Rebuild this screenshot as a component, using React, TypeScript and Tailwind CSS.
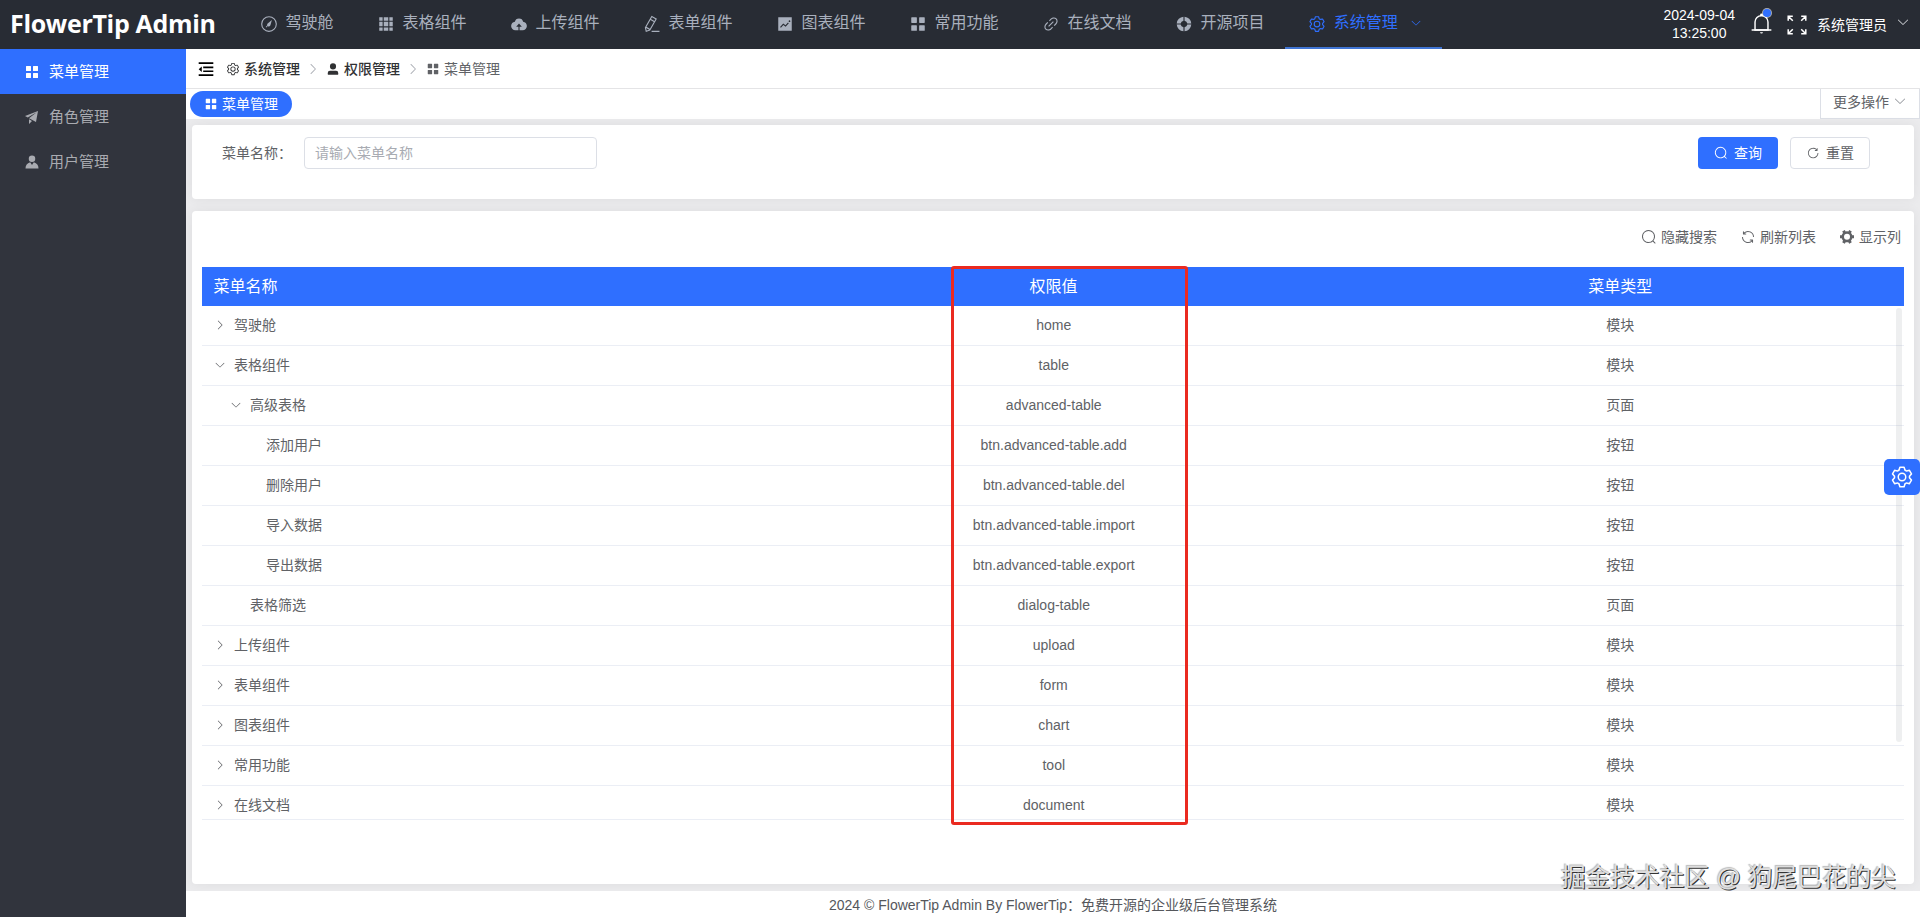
import { useState } from "react";

const paths: Record<string, string[]> = {
  setting: [
    "M600.704 64a32 32 0 0 1 30.464 22.208l35.2 109.376c14.784 7.232 28.928 15.36 42.432 24.512l112.384-24.192a32 32 0 0 1 34.432 15.36L944.32 364.8a32 32 0 0 1-4.032 37.504l-77.12 85.12a357.12 357.12 0 0 1 0 49.024l77.12 85.248a32 32 0 0 1 4.032 37.504l-88.704 153.6a32 32 0 0 1-34.432 15.296L708.8 803.904c-13.44 9.088-27.648 17.28-42.368 24.512l-35.264 109.376A32 32 0 0 1 600.704 960H423.296a32 32 0 0 1-30.464-22.208L357.696 828.48a351.616 351.616 0 0 1-42.56-24.64l-112.32 24.256a32 32 0 0 1-34.432-15.36L79.68 659.2a32 32 0 0 1 4.032-37.504l77.12-85.248a357.12 357.12 0 0 1 0-48.896l-77.12-85.248A32 32 0 0 1 79.68 364.8l88.704-153.6a32 32 0 0 1 34.432-15.296l112.32 24.256c13.568-9.152 27.776-17.408 42.56-24.64l35.2-109.312A32 32 0 0 1 423.232 64H600.64zm-23.424 64H446.72l-36.352 113.088-24.512 11.968a294.113 294.113 0 0 0-34.816 20.096l-22.656 15.36-116.224-25.088-65.28 113.152 79.68 88.192-1.92 27.136a293.12 293.12 0 0 0 0 40.192l1.92 27.136-79.808 88.192 65.344 113.152 116.224-25.024 22.656 15.296a294.113 294.113 0 0 0 34.816 20.096l24.512 11.968L446.72 896h130.688l36.48-113.152 24.448-11.904a288.282 288.282 0 0 0 34.752-20.096l22.592-15.296 116.288 25.024 65.28-113.152-79.744-88.192 1.92-27.136a293.12 293.12 0 0 0 0-40.256l-1.92-27.136 79.808-88.128-65.344-113.152-116.288 24.96-22.592-15.232a287.616 287.616 0 0 0-34.752-20.096l-24.448-11.904L577.344 128zM512 320a192 192 0 1 1 0 384 192 192 0 0 1 0-384m0 64a128 128 0 1 0 0 256 128 128 0 0 0 0-256",
  ],
  search: [
    "m795.904 750.72 124.992 124.928a32 32 0 0 1-45.248 45.248L750.656 795.904a416 416 0 1 1 45.248-45.248zM480 832a352 352 0 1 0 0-704 352 352 0 0 0 0 704",
  ],
  down: [
    "M831.872 340.864 512 652.672 192.128 340.864a30.592 30.592 0 0 0-42.752 0 29.12 29.12 0 0 0 0 41.6L489.664 714.24a32 32 0 0 0 44.672 0l340.288-331.712a29.12 29.12 0 0 0 0-41.728 30.592 30.592 0 0 0-42.752 0z",
  ],
  right: [
    "M340.864 149.312a30.592 30.592 0 0 0 0 42.752L652.736 512 340.864 831.872a30.592 30.592 0 0 0 0 42.752 29.12 29.12 0 0 0 41.728 0L714.24 534.336a32 32 0 0 0 0-44.672L382.592 149.376a29.12 29.12 0 0 0-41.728 0z",
  ],
  refresh: [
    "M771.776 794.88A384 384 0 0 1 128 512h64a320 320 0 0 0 555.712 216.448H654.72a32 32 0 1 1 0-64h149.056a32 32 0 0 1 32 32v148.928a32 32 0 1 1-64 0v-50.56zM276.288 295.616h92.992a32 32 0 0 1 0 64H220.16a32 32 0 0 1-32-32V178.56a32 32 0 0 1 64 0v50.56A384 384 0 0 1 896.128 512h-64a320 320 0 0 0-555.776-216.384z",
  ],
  reset: [
    "M784.512 230.272v-50.56a32 32 0 1 1 64 0v149.056a32 32 0 0 1-32 32H667.52a32 32 0 1 1 0-64h92.992A320 320 0 1 0 524.8 833.152a320 320 0 0 0 320-320h64a384 384 0 0 1-384 384 384 384 0 0 1-384-384 384 384 0 0 1 643.712-282.88z",
  ],
  bell: [
    "M512 64a64 64 0 0 1 64 64v64H448v-64a64 64 0 0 1 64-64",
    "M256 768h512V448a256 256 0 1 0-512 0zm256-640a320 320 0 0 1 320 320v384H192V448a320 320 0 0 1 320-320",
    "M96 768h832q32 0 32 32t-32 32H96q-32 0-32-32t32-32m352 128h128a64 64 0 0 1-128 0",
  ],
  user: [
    "M288 320a224 224 0 1 0 448 0 224 224 0 1 0-448 0m544 608H160a32 32 0 0 1-32-32v-96a160 160 0 0 1 160-160h448a160 160 0 0 1 160 160v96a32 32 0 0 1-32 32z",
  ],
  promotion: [
    "m64 448 832-320-128 704-446.08-243.328L832 192 242.816 545.472zm256 512V657.024L512 768z",
  ],
  avatar: [
    "M628.736 528.896A416 416 0 0 1 928 928H96a415.872 415.872 0 0 1 299.264-399.104L512 704zM720 304a208 208 0 1 1-416 0 208 208 0 0 1 416 0",
  ],
  menu: [
    "M160 448a32 32 0 0 1-32-32V160a32 32 0 0 1 32-32h256a32 32 0 0 1 32 32v256a32 32 0 0 1-32 32zm448 0a32 32 0 0 1-32-32V160a32 32 0 0 1 32-32h256a32 32 0 0 1 32 32v256a32 32 0 0 1-32 32zM160 896a32 32 0 0 1-32-32V608a32 32 0 0 1 32-32h256a32 32 0 0 1 32 32v256a32 32 0 0 1-32 32zm448 0a32 32 0 0 1-32-32V608a32 32 0 0 1 32-32h256a32 32 0 0 1 32 32v256a32 32 0 0 1-32 32z",
  ],
  grid: [
    "M640 384v256H384V384zm64 0h192v256H704zm-64 512H384V704h256zm64 0V704h192v192zm-64-768v192H384V128zm64 0h192v192H704zM320 384v256H128V384zm0 512H128V704h192zm0-768v192H128V128z",
  ],
  upload: [
    "M544 864V672h128L512 480 352 672h128v192H320v-1.6c-5.376.32-10.496 1.6-16 1.6A240 240 0 0 1 64 624c0-123.136 93.12-223.488 212.608-237.248A239.808 239.808 0 0 1 512 192a239.872 239.872 0 0 1 235.456 194.752c119.488 13.76 212.48 114.112 212.48 237.248a240 240 0 0 1-240 240c-5.376 0-10.56-1.28-16-1.6v1.6z",
  ],
  edit: [
    "m199.04 672.64 193.984 112 224-387.968-193.92-112-224 388.032zm-23.872 60.16 32.896 148.288 144.896-45.696zM455.04 229.248l193.92 112 56.704-98.112-193.984-112-56.64 98.112zM104.32 708.8l384-665.024 304.768 175.936L409.152 884.8h.064l-248.448 78.336zm384 254.272v-64h448v64h-448z",
  ],
  chart: [
    "M128 896V128h768v768zm291.712-327.296 128 102.4 180.16-201.792-47.744-42.624-139.84 156.608-128-102.4-180.16 201.792 47.744 42.624 139.84-156.608zM816 352a48 48 0 1 0-96 0 48 48 0 0 0 96 0",
  ],
  compass: [
    "M512 896a384 384 0 1 0 0-768 384 384 0 0 0 0 768m0 64a448 448 0 1 1 0-896 448 448 0 0 1 0 896",
    "M676 290 592 590a90 90 0 0 1-80 70 84 84 0 0 1-66-30L360 716l-36-36 88-90a88 88 0 0 1 24-104z",
  ],
  link: [
    "M715.648 625.152 670.4 579.904l90.496-90.56c75.008-74.944 85.12-186.368 22.656-248.896-62.528-62.464-173.952-52.352-248.96 22.656L444.16 353.6l-45.248-45.248 90.496-90.496c100.032-99.968 251.968-110.08 339.456-22.656 87.488 87.488 77.312 239.424-22.656 339.456l-90.496 90.496zm-90.496 90.496-90.496 90.496C434.624 906.112 282.688 916.224 195.2 828.8c-87.488-87.488-77.312-239.424 22.656-339.456l90.496-90.496 45.248 45.248-90.496 90.56c-75.008 74.944-85.12 186.368-22.656 248.896 62.528 62.464 173.952 52.352 248.96-22.656l90.496-90.496zm0-362.048 45.248 45.248L398.848 670.4 353.6 625.152z",
  ],
  help: [
    "M926.784 480H701.312A192.512 192.512 0 0 0 544 322.688V97.216A416.064 416.064 0 0 1 926.784 480m0 64A416.064 416.064 0 0 1 544 926.784V701.312A192.512 192.512 0 0 0 701.312 544zM97.28 544h225.472A192.512 192.512 0 0 0 480 701.312v225.472A416.064 416.064 0 0 1 97.216 544zm0-64A416.064 416.064 0 0 1 480 97.216v225.472A192.512 192.512 0 0 0 322.688 480H97.216z",
  ],
  tools: [
    "M764.416 254.72a351.68 351.68 0 0 1 86.336 149.184H960v192.064H850.752a351.68 351.68 0 0 1-86.336 149.312l54.72 94.72-166.272 96-54.592-94.72a352.64 352.64 0 0 1-172.48 0L371.136 936l-166.272-96 54.72-94.72a351.68 351.68 0 0 1-86.336-149.312H64v-192h109.248a351.68 351.68 0 0 1 86.336-149.312L204.8 160l166.208-96h.192l54.656 94.592a352.64 352.64 0 0 1 172.48 0L652.8 64h.128L819.2 160l-54.72 94.72zM704 499.968a192 192 0 1 0-384 0 192 192 0 0 0 384 0",
  ],
  fold: [
    "M96 128h832v96H96zM352 368h576v96H352zM352 592h576v96H352zM96 816h832v96H96zM272 368v320L96 528z",
  ],
};

function Icon({ name, className = "" }: { name: string; className?: string }) {
  return (
    <svg viewBox="0 0 1024 1024" fill="currentColor" className={`shrink-0 ${className}`} aria-hidden="true">
      {paths[name].map((d) => (
        <path key={d} d={d} />
      ))}
    </svg>
  );
}

const navItems = [
  { icon: "compass", label: "驾驶舱" },
  { icon: "grid", label: "表格组件" },
  { icon: "upload", label: "上传组件" },
  { icon: "edit", label: "表单组件" },
  { icon: "chart", label: "图表组件" },
  { icon: "menu", label: "常用功能" },
  { icon: "link", label: "在线文档" },
  { icon: "help", label: "开源项目" },
];

const sideItems = [
  { icon: "menu", label: "菜单管理" },
  { icon: "promotion", label: "角色管理" },
  { icon: "avatar", label: "用户管理" },
];

type Row = { name: string; value: string; type: string; level: number; arrow?: "right" | "down" };

const rows: Row[] = [
  { name: "驾驶舱", value: "home", type: "模块", level: 0, arrow: "right" },
  { name: "表格组件", value: "table", type: "模块", level: 0, arrow: "down" },
  { name: "高级表格", value: "advanced-table", type: "页面", level: 1, arrow: "down" },
  { name: "添加用户", value: "btn.advanced-table.add", type: "按钮", level: 2 },
  { name: "删除用户", value: "btn.advanced-table.del", type: "按钮", level: 2 },
  { name: "导入数据", value: "btn.advanced-table.import", type: "按钮", level: 2 },
  { name: "导出数据", value: "btn.advanced-table.export", type: "按钮", level: 2 },
  { name: "表格筛选", value: "dialog-table", type: "页面", level: 1 },
  { name: "上传组件", value: "upload", type: "模块", level: 0, arrow: "right" },
  { name: "表单组件", value: "form", type: "模块", level: 0, arrow: "right" },
  { name: "图表组件", value: "chart", type: "模块", level: 0, arrow: "right" },
  { name: "常用功能", value: "tool", type: "模块", level: 0, arrow: "right" },
  { name: "在线文档", value: "document", type: "模块", level: 0, arrow: "right" },
];

const indents = ["pl-3", "pl-7", "pl-11"];

function Header() {
  return (
    <header className="flex h-[49px] shrink-0 bg-[#282c34]">
      <div className="flex w-[236.5px] shrink-0 items-center pb-px pl-[10px] font-['Open_Sans'] text-[25px] font-bold tracking-[-0.32px] whitespace-nowrap text-white">
        FlowerTip Admin
      </div>
      <nav className="flex text-base text-[#a9b0bd]">
        {navItems.map((item) => (
          <a key={item.label} className="flex items-center px-5 pb-[3px]">
            <span className="mr-[5px] flex w-6 justify-center pt-[2px]">
              <Icon name={item.icon} className="size-[18px]" />
            </span>
            {item.label}
          </a>
        ))}
        <a className="flex w-[157px] items-center border-b-2 border-[#4075d4] pl-5 pb-px text-[#2f6fff]">
          <span className="mr-[5px] flex w-6 justify-center pt-[2px]">
            <Icon name="setting" className="size-[18px]" />
          </span>
          系统管理
          <Icon name="down" className="ml-3 size-3" />
        </a>
      </nav>
      <div className="ml-auto flex items-center text-sm text-white">
        <div className="mr-[15px] pb-px text-center leading-[18px]">
          2024-09-04
          <br />
          13:25:00
        </div>
        <div className="relative mr-[14px] mb-[2px]">
          <Icon name="bell" className="size-[23px]" />
          <span className="absolute -top-[3px] right-[2px] size-2 rounded-full bg-[#2f6fff] ring-1 ring-white/60" />
        </div>
        <svg viewBox="0 0 20 20" className="mr-[10px] size-5" fill="none" stroke="currentColor" strokeWidth="1.5">
          <path d="M1.2 5.8V1.2h4.6M1.2 1.2l4.6 4.6M14.2 1.2h4.6v4.6M18.8 1.2l-4.6 4.6M1.2 14.2v4.6h4.6M1.2 18.8l4.6-4.6M18.8 14.2v4.6h-4.6M18.8 18.8l-4.6-4.6" />
        </svg>
        <span className="leading-5">系统管理员</span>
        <Icon name="down" className="mr-[10px] mb-[5px] ml-[9px] size-[14px] text-[#d5d7db]" />
      </div>
    </header>
  );
}

function Sidebar() {
  return (
    <aside className="w-[186px] shrink-0 bg-[#31343d]">
      {sideItems.map((item, i) => (
        <a
          key={item.label}
          className={`flex h-[45px] items-center pl-6 text-[15px] ${i === 0 ? "bg-[#2f6fff] text-white" : "text-[#a9abb1]"}`}
        >
          <Icon name={item.icon} className="mr-[9px] size-4" />
          <span className="pt-px">{item.label}</span>
        </a>
      ))}
    </aside>
  );
}

function Breadcrumb() {
  return (
    <div className="flex h-10 shrink-0 items-center border-b border-[#e4e4e6] pl-[11px] text-sm">
      <Icon name="fold" className="mr-[11px] size-[18px] text-black" />
      <Icon name="setting" className="mr-1 size-[14px] text-[#303133]" />
      <span className="font-medium text-[#303133]">系统管理</span>
      <Icon name="right" className="mx-[6px] size-[14px] text-[#a8abb2]" />
      <Icon name="user" className="mr-1 size-[14px] text-[#303133]" />
      <span className="font-medium text-[#303133]">权限管理</span>
      <Icon name="right" className="mx-[6px] size-[14px] text-[#a8abb2]" />
      <Icon name="menu" className="mr-1 size-[14px] text-[#606266]" />
      <span className="text-[#606266]">菜单管理</span>
    </div>
  );
}

function TabBar() {
  return (
    <div className="flex h-[30px] shrink-0 items-center pl-1 text-sm">
      <div className="flex h-[26px] w-[102px] items-center justify-center gap-1 rounded-full bg-[#2f6fff] text-white">
        <Icon name="menu" className="size-[14px]" />
        <span>菜单管理</span>
      </div>
      <div className="ml-auto flex h-[30px] w-[100px] items-center border border-t-0 border-[#dcdfe6] pb-[3px] pl-3 text-[#606266]">
        更多操作
        <Icon name="down" className="mb-[3px] ml-1 size-[14px] text-[#909399]" />
      </div>
    </div>
  );
}

function SearchCard() {
  return (
    <section className="flex h-[74px] shrink-0 items-start rounded-[4px] bg-white pt-3 pr-11 pl-[30px] text-sm text-[#606266] shadow-[0_0_12px_rgba(0,0,0,0.06)]">
      <label className="w-[82px] leading-8">菜单名称：</label>
      <input
        className="h-8 w-[293px] rounded-[4px] border border-[#dcdfe6] px-[10px] text-sm placeholder:text-[#a8abb2]"
        placeholder="请输入菜单名称"
      />
      <button className="ml-auto flex h-8 w-20 items-center justify-center gap-[6px] rounded-[4px] bg-[#2f6fff] text-white">
        <Icon name="search" className="size-[14px]" />
        查询
      </button>
      <button className="ml-3 flex h-8 w-20 items-center justify-center gap-[6px] rounded-[4px] border border-[#dcdfe6]">
        <Icon name="reset" className="size-[14px]" />
        重置
      </button>
    </section>
  );
}

function Toolbar() {
  return (
    <div className="flex h-[56px] items-center justify-end gap-[23px] pr-[3px] pb-[5px]">
      <span className="flex items-center gap-1">
        <Icon name="search" className="size-4" />
        隐藏搜索
      </span>
      <span className="flex items-center gap-1">
        <Icon name="refresh" className="size-4" />
        刷新列表
      </span>
      <span className="flex items-center gap-1">
        <Icon name="tools" className="size-4" />
        显示列
      </span>
    </div>
  );
}

function PermissionTable() {
  return (
    <div className="relative">
      <div className="grid h-[39px] grid-cols-3 items-center bg-[#2f6fff] text-base text-white">
        <div className="pl-[11.5px]">菜单名称</div>
        <div className="pl-px text-center">权限值</div>
        <div className="text-center">菜单类型</div>
      </div>
      <div className="h-[514px] overflow-hidden border-b border-[#ebeef5]">
        {rows.map((row) => (
          <div key={row.value} className="grid h-10 grid-cols-3 items-center border-b border-[#ebeef5] pb-[2px]">
            <div className={`flex items-center ${indents[row.level]}`}>
              {row.arrow ? (
                <Icon name={row.arrow} className="mr-2 size-3" />
              ) : (
                <span className="mr-2 w-3" />
              )}
              {row.name}
            </div>
            <div className="pl-[1.5px] text-center">{row.value}</div>
            <div className="text-center">{row.type}</div>
          </div>
        ))}
      </div>
      <div className="absolute top-[41px] right-[2px] h-[434px] w-[6px] rounded-full bg-[#909399]/15" />
      <div className="absolute -top-px left-[748.5px] h-[559px] w-[237px] rounded-[3px] border-3 border-[#ea2a20]" />
    </div>
  );
}

export default function App() {
  const [year] = useState(2024);
  return (
    <div className="relative flex h-[917px] w-[1920px] flex-col overflow-hidden bg-white font-['Liberation_Sans','Noto_Sans_CJK_SC',sans-serif]">
      <Header />
      <div className="flex min-h-0 flex-1">
        <Sidebar />
        <div className="flex min-w-0 flex-1 flex-col">
          <Breadcrumb />
          <TabBar />
          <main className="flex flex-1 flex-col gap-3 bg-[#ebebed] p-[6px] pb-[7px]">
            <SearchCard />
            <section className="flex-1 rounded-[4px] bg-white px-[10px] text-sm text-[#606266] shadow-[0_0_12px_rgba(0,0,0,0.06)]">
              <Toolbar />
              <PermissionTable />
            </section>
          </main>
          <footer className="z-10 flex h-[26px] shrink-0 items-center justify-center bg-white pt-px text-sm text-[#55575c]">
            {year} © FlowerTip Admin By FlowerTip：免费开源的企业级后台管理系统
          </footer>
        </div>
      </div>
      <button className="absolute top-[459px] right-0 z-20 flex size-9 items-center justify-center rounded-[5px] bg-[#2f6fff] text-white">
        <Icon name="setting" className="size-6" />
      </button>
      <div className="absolute top-[860px] right-[24px] z-20 text-[24.7px] leading-9 whitespace-nowrap text-[#dedede] [text-shadow:1px_1px_0_#333,-1px_-1px_1px_#bbb]">
        掘金技术社区 @ 狗尾巴花的尖
      </div>
    </div>
  );
}
